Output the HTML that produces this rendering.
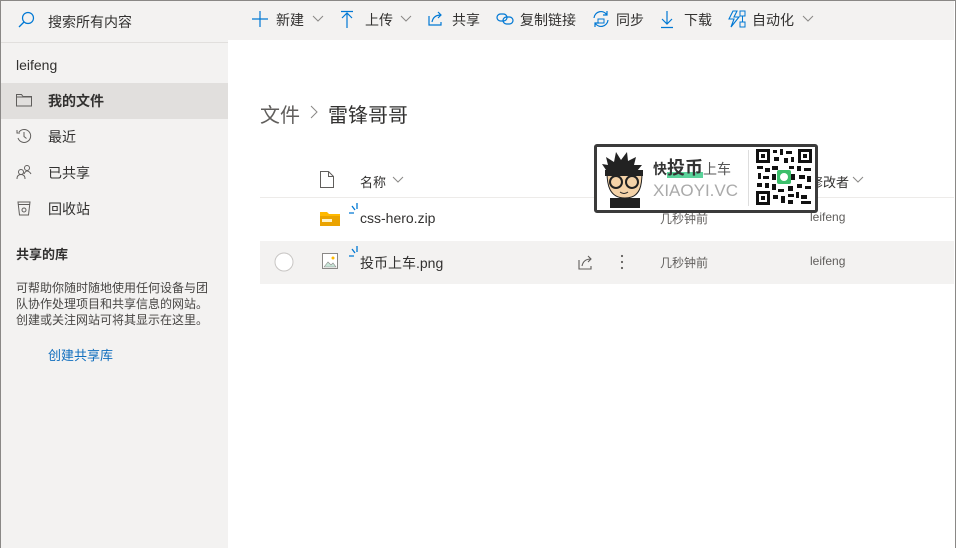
<!DOCTYPE html>
<html><head><meta charset="utf-8"><style>
*{margin:0;padding:0;box-sizing:border-box}
body{width:956px;height:548px;overflow:hidden;position:relative;background:#fff;font-family:"Liberation Sans","Noto Sans CJK SC",sans-serif;color:#323130;font-size:13px}
.a{position:absolute;white-space:nowrap}
svg{position:absolute;overflow:visible}
</style></head><body>
<div class="a" style="left:0;top:0;width:956px;height:548px;border:1px solid #8a8886;border-bottom:none"></div>
<div class="a" style="left:1px;top:1px;width:227px;height:547px;background:#f3f2f1"></div>
<div class="a" style="left:228px;top:1px;width:726px;height:39px;background:#f3f2f1"></div>
<div class="a" style="left:1px;top:42px;width:227px;height:1px;background:#e1dfdd"></div>
<div class="a" style="left:1px;top:83px;width:227px;height:36px;background:#e1dfdd"></div>

<svg style="left:18px;top:11px" width="18" height="18"><circle cx="10" cy="7" r="5.5" fill="none" stroke="#0078d4" stroke-width="1.2"/><line x1="6" y1="11" x2="1" y2="16" stroke="#0078d4" stroke-width="1.3"/></svg>
<div class="a" style="left:48px;top:12px;font-size:14px">搜索所有内容</div>
<div class="a" style="left:16px;top:57px;font-size:14px">leifeng</div>
<svg style="left:16px;top:93px" width="16" height="14"><path d="M.5 1.5h5l1.5 2h8.5v9.5H.5z M.5 4h15" fill="none" stroke="#605e5c"/></svg>
<div class="a" style="left:48px;top:91px;font-size:14px;font-weight:bold">我的文件</div>
<svg style="left:16px;top:128px" width="16" height="16"><path d="M3 4A6.5 6.5 0 1 1 2 10 M1 2v3h3 M8 4v4.5l2.5 2" fill="none" stroke="#605e5c"/></svg>
<div class="a" style="left:48px;top:127px;font-size:14px">最近</div>
<svg style="left:16px;top:164px" width="16" height="16"><circle cx="5" cy="8" r="2.5" fill="none" stroke="#605e5c"/><circle cx="11" cy="4" r="2.5" fill="none" stroke="#605e5c"/><path d="M1 15c0-3 1.5-4.5 4-4.5s4 1.5 4 4.5 M8 10c1-2 2-3 3-3s3 1 4 3" fill="none" stroke="#605e5c"/></svg>
<div class="a" style="left:48px;top:163px;font-size:14px">已共享</div>
<svg style="left:17px;top:200px" width="14" height="16"><path d="M1 2h12l-1.5 13h-9z M1 4.5h12" fill="none" stroke="#605e5c"/><circle cx="7" cy="10" r="2" fill="none" stroke="#605e5c"/></svg>
<div class="a" style="left:48px;top:199px;font-size:14px">回收站</div>
<div class="a" style="left:16px;top:244px;font-size:13px;font-weight:bold">共享的库</div>
<div class="a" style="left:16px;top:280px;font-size:12px;line-height:16px;color:#484644">可帮助你随时随地使用任何设备与团<br>队协作处理项目和共享信息的网站。<br>创建或关注网站可将其显示在这里。</div>
<div class="a" style="left:48px;top:345px;font-size:13px;color:#106ebe">创建共享库</div>

<svg style="left:252px;top:11px" width="16" height="16"><path d="M8 0v16M0 8h16" stroke="#0078d4" stroke-width="1.2"/></svg>
<div class="a" style="left:276px;top:10px;font-size:14px">新建</div>
<svg style="left:312px;top:15px" width="12" height="8"><path d="M1 1l5 5 5-5" fill="none" stroke="#8a8886"/></svg>
<svg style="left:341px;top:11px" width="12" height="17"><path d="M0 .5h12M6 2v15M1 7l5-5 5 5" fill="none" stroke="#0078d4" stroke-width="1.2"/></svg>
<div class="a" style="left:365px;top:10px;font-size:14px">上传</div>
<svg style="left:400px;top:15px" width="12" height="8"><path d="M1 1l5 5 5-5" fill="none" stroke="#8a8886"/></svg>
<svg style="left:428px;top:11px" width="16" height="15"><path d="M1 5v9h12v-3 M4 11c1-5 4-7 9-7 M10 1l3 3-3 3" fill="none" stroke="#0078d4" stroke-width="1.2"/></svg>
<div class="a" style="left:452px;top:10px;font-size:14px">共享</div>
<svg style="left:496px;top:12px" width="18" height="14"><rect x="1" y="2" width="10" height="7" rx="3.5" fill="none" stroke="#0078d4" stroke-width="1.2"/><rect x="7" y="5" width="10" height="7" rx="3.5" fill="none" stroke="#0078d4" stroke-width="1.2"/></svg>
<div class="a" style="left:520px;top:10px;font-size:14px">复制链接</div>
<svg style="left:592px;top:10px" width="18" height="18"><path d="M2 8a7 7 0 0 1 13-3 M15 1v4h-4 M16 10a7 7 0 0 1-13 3 M3 17v-4h4" fill="none" stroke="#0078d4" stroke-width="1.2"/><rect x="6" y="9" width="6" height="4" fill="none" stroke="#0078d4"/></svg>
<div class="a" style="left:616px;top:10px;font-size:14px">同步</div>
<svg style="left:661px;top:11px" width="12" height="17"><path d="M6 0v13M1 8l5 5 5-5M0 16.5h12" fill="none" stroke="#0078d4" stroke-width="1.2"/></svg>
<div class="a" style="left:684px;top:10px;font-size:14px">下载</div>
<svg style="left:728px;top:10px" width="18" height="18"><path d="M5 1L1 9h5l-3 8 8-10H6l3-6z" fill="none" stroke="#0078d4" stroke-width="1.1"/><rect x="12" y="1" width="5" height="5" fill="none" stroke="#0078d4"/><rect x="12" y="12" width="5" height="5" fill="none" stroke="#0078d4"/><path d="M14.5 6v6" stroke="#0078d4"/></svg>
<div class="a" style="left:752px;top:10px;font-size:14px">自动化</div>
<svg style="left:802px;top:15px" width="12" height="8"><path d="M1 1l5 5 5-5" fill="none" stroke="#8a8886"/></svg>

<div class="a" style="left:260px;top:99px;font-size:20px;color:#605e5c">文件</div>
<svg style="left:310px;top:105px" width="8" height="14"><path d="M1 1l6 6-6 6" fill="none" stroke="#8a8886"/></svg>
<div class="a" style="left:328px;top:99px;font-size:20px">雷锋哥哥</div>

<svg style="left:320px;top:171px" width="14" height="17"><path d="M.5.5h8l5 5v11H.5z M8.5.5v5h5" fill="none" stroke="#605e5c"/></svg>
<div class="a" style="left:360px;top:172px;font-size:13px">名称</div>
<svg style="left:392px;top:176px" width="12" height="8"><path d="M1 1l5 5 5-5" fill="none" stroke="#8a8886"/></svg>
<div class="a" style="left:810px;top:172px;font-size:13px">修改者</div>
<svg style="left:852px;top:176px" width="12" height="8"><path d="M1 1l5 5 5-5" fill="none" stroke="#8a8886"/></svg>
<div class="a" style="left:260px;top:197px;width:694px;height:1px;background:#edebe9"></div>

<svg style="left:320px;top:210px" width="20" height="16"><path d="M0 2h7l2 2h11v12H0z" fill="#ffb900"/><path d="M0 6h20v10H0z" fill="#eaa300"/><rect x="2" y="9" width="10" height="3" fill="#fff3c6"/></svg>
<svg style="left:349px;top:203px" width="12" height="14"><path d="M8 0v6M3 3l3 4M0 10h5" stroke="#0078d4" stroke-width="1.3"/></svg>
<div class="a" style="left:360px;top:210px;font-size:14px">css-hero.zip</div>
<div class="a" style="left:660px;top:210px;font-size:12px;color:#605e5c">几秒钟前</div>
<div class="a" style="left:810px;top:210px;font-size:12px;color:#605e5c">leifeng</div>

<div class="a" style="left:260px;top:241px;width:694px;height:43px;background:#f3f2f1"></div>
<svg style="left:274px;top:252px" width="20" height="20"><circle cx="10" cy="10" r="9" fill="#fff" stroke="#c8c6c4"/></svg>
<svg style="left:322px;top:253px" width="16" height="16"><rect x=".5" y=".5" width="15" height="15" fill="#fff" stroke="#8a8886"/><path d="M2 14l4-5 3 3 2-2 3 4z" fill="#c8e6d8" stroke="#8a8886" stroke-width=".6"/><circle cx="11" cy="5" r="1.5" fill="#ffb900"/></svg>
<svg style="left:349px;top:246px" width="12" height="14"><path d="M8 0v6M3 3l3 4M0 10h5" stroke="#0078d4" stroke-width="1.3"/></svg>
<div class="a" style="left:360px;top:253px;font-size:14px">投币上车.png</div>
<svg style="left:578px;top:255px" width="16" height="15"><path d="M1 5v9h12v-3 M4 11c1-5 4-7 9-7 M10 1l3 3-3 3" fill="none" stroke="#605e5c" stroke-width="1.1"/></svg>
<svg style="left:620px;top:254px" width="4" height="16"><circle cx="2" cy="2" r="1.1" fill="#605e5c"/><circle cx="2" cy="8" r="1.1" fill="#605e5c"/><circle cx="2" cy="14" r="1.1" fill="#605e5c"/></svg>
<div class="a" style="left:660px;top:254px;font-size:12px;color:#605e5c">几秒钟前</div>
<div class="a" style="left:810px;top:254px;font-size:12px;color:#605e5c">leifeng</div>

<div class="a" style="left:594px;top:144px;width:224px;height:69px;background:#fff;border:3px solid #3b3b3b;border-radius:3px"></div>
<svg style="left:598px;top:150px" width="50" height="58"><path d="M8 20l-4-6 6 1-2-8 8 5 2-10 5 8 6-8 1 9 8-4-2 8 8 0-5 6 4 4-5 1" fill="#222"/><path d="M9 22c0 12 2 26 18 26s17-14 17-26z" fill="#f5d3a8" stroke="#222"/><path d="M7 20h38v6H7z" fill="#222"/><circle cx="18" cy="32" r="6" fill="none" stroke="#222" stroke-width="2"/><circle cx="34" cy="32" r="6" fill="none" stroke="#222" stroke-width="2"/><path d="M22 42q4 3 8 0" fill="none" stroke="#222"/><path d="M12 48h30v10H12z" fill="#222"/></svg>
<div class="a" style="left:653px;top:157px;font-size:14px;font-weight:bold;color:#333;line-height:22px">快<span style="font-size:18px;background:linear-gradient(transparent 70%,#5ad39a 70%)">投币</span><span style="font-weight:normal;color:#555;font-size:14px">上车</span></div>
<div class="a" style="left:653px;top:181px;font-size:17px;color:#aaa;line-height:20px">XIAOYI.VC</div>
<div class="a" style="left:748px;top:150px;width:1px;height:56px;background:#ddd"></div>
<svg style="left:755px;top:148px" width="58" height="58"><rect width="58" height="58" fill="#fff"/>
<g fill="#111"><path d="M1 1h14v14H1zM4 4v8h8V4zM6 6h4v4H6z" fill-rule="evenodd"/><path d="M43 1h14v14H43zM46 4v8h8V4zM48 6h4v4h-4z" fill-rule="evenodd"/><path d="M1 43h14v14H1zM4 46v8h8v-8zM6 48h4v4H6z" fill-rule="evenodd"/>
<rect x="18" y="2" width="4" height="3"/><rect x="25" y="1" width="3" height="6"/><rect x="31" y="3" width="6" height="3"/><rect x="19" y="9" width="5" height="4"/><rect x="29" y="10" width="4" height="5"/><rect x="36" y="9" width="3" height="5"/><rect x="2" y="18" width="6" height="3"/><rect x="10" y="20" width="5" height="4"/><rect x="3" y="25" width="3" height="6"/><rect x="8" y="28" width="6" height="3"/><rect x="2" y="35" width="5" height="4"/><rect x="10" y="35" width="4" height="5"/><rect x="17" y="18" width="6" height="4"/><rect x="34" y="18" width="5" height="3"/><rect x="42" y="18" width="4" height="5"/><rect x="49" y="20" width="7" height="3"/><rect x="44" y="27" width="6" height="4"/><rect x="52" y="28" width="4" height="6"/><rect x="42" y="36" width="5" height="4"/><rect x="50" y="38" width="6" height="3"/><rect x="17" y="36" width="4" height="6"/><rect x="23" y="41" width="6" height="3"/><rect x="33" y="38" width="5" height="5"/><rect x="18" y="47" width="5" height="4"/><rect x="26" y="48" width="4" height="7"/><rect x="33" y="46" width="6" height="3"/><rect x="41" y="44" width="3" height="6"/><rect x="46" y="47" width="6" height="4"/><rect x="33" y="52" width="5" height="4"/><rect x="46" y="53" width="10" height="3"/><rect x="17" y="26" width="4" height="6"/><rect x="36" y="26" width="4" height="6"/></g>
<rect x="22" y="22" width="14" height="14" rx="2" fill="#3cbf6b"/><circle cx="29" cy="29" r="4" fill="#fff"/></svg>
</body></html>
